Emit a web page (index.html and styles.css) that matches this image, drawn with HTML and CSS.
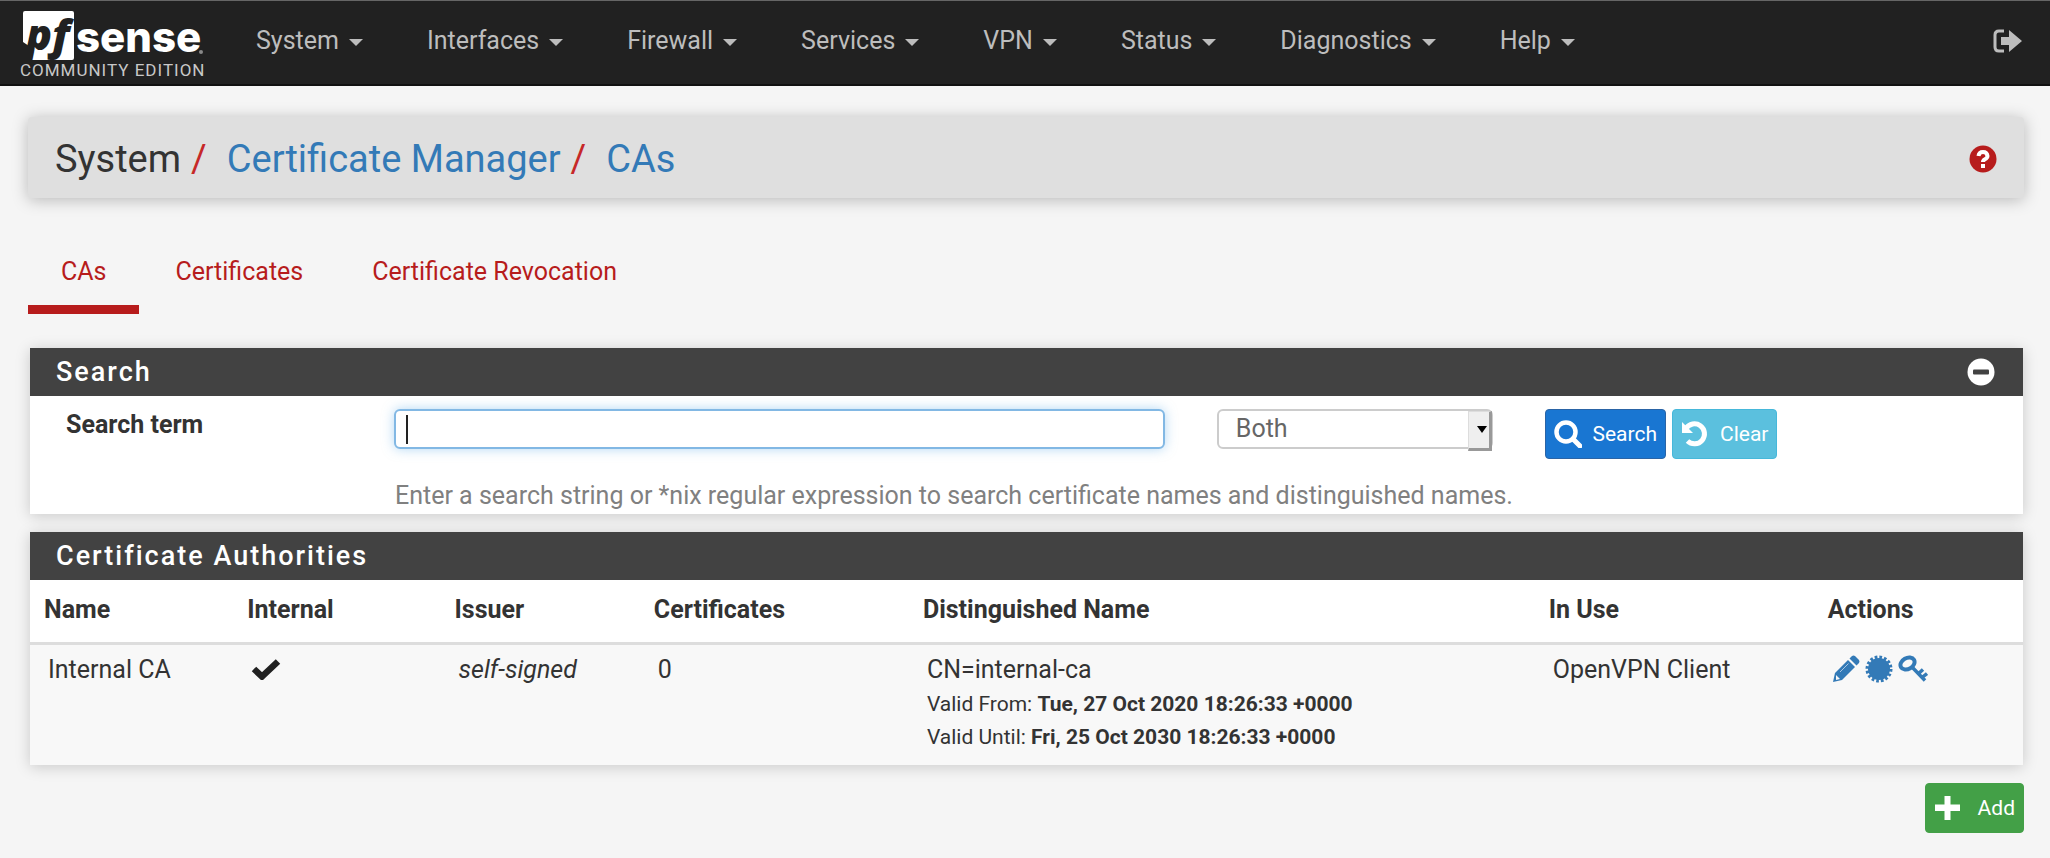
FILE: index.html
```html
<!DOCTYPE html>
<html lang="en">
<head>
  <meta charset="UTF-8">
  <meta name="viewport" content="width=device-width, initial-scale=1.0">
  <title>System: Certificate Manager: CAs</title>
  <link rel="stylesheet" href="styles.css">
</head>
<body>
  <nav class="navbar">
    <a class="navbar-brand" href="#" aria-label="pfSense Community Edition">
      <svg class="logo" viewBox="0 0 190 72" width="190" height="72">
        <path fill="#fff" d="M5 4h47q2 0 2 2v45q0 2-2 2H8l4-12-9-6V6q0-2 2-2z"/>
        <text class="logo-pf" x="6" y="43">pf</text>
        <text class="logo-sense" x="56" y="45">sense</text>
        <circle cx="181" cy="45" r="2" fill="#888"/>
        <text class="logo-edition" x="0" y="69">COMMUNITY EDITION</text>
      </svg>
    </a>
    <ul class="nav-menu">
      <li><a href="#">System <span class="caret"></span></a></li>
      <li><a href="#">Interfaces <span class="caret"></span></a></li>
      <li><a href="#">Firewall <span class="caret"></span></a></li>
      <li><a href="#">Services <span class="caret"></span></a></li>
      <li><a href="#">VPN <span class="caret"></span></a></li>
      <li><a href="#">Status <span class="caret"></span></a></li>
      <li><a href="#">Diagnostics <span class="caret"></span></a></li>
      <li><a href="#">Help <span class="caret"></span></a></li>
    </ul>
    <a class="logout" href="#" aria-label="Logout">
      <svg viewBox="0 0 30 24" width="30" height="24">
        <path d="M11 2H6Q2 2 2 6v12q0 4 4 4h5" fill="none" stroke="currentColor" stroke-width="3"/>
        <path d="M8 8h8V1l13 11-13 11v-7H8z" fill="currentColor"/>
      </svg>
    </a>
  </nav>

  <main class="container">
    <header class="page-header">
      <ol class="breadcrumb">
        <li>System</li>
        <li><a href="#">Certificate Manager</a></li>
        <li><a href="#">CAs</a></li>
      </ol>
      <a class="help" href="#" aria-label="Help for this page">
        <svg viewBox="0 0 28 28" width="28" height="28">
          <circle cx="14" cy="14" r="13.5" fill="currentColor"/>
          <path d="M9.500 11Q10 7 14 7t4.500 4q0 2-2.500 3.300-2 1-2 2.700" fill="none" stroke="#fff" stroke-width="4"/>
          <path d="M12 19h4v4h-4z" fill="#fff"/>
        </svg>
      </a>
    </header>

    <ul class="tabs">
      <li class="active"><a href="#">CAs</a></li>
      <li><a href="#">Certificates</a></li>
      <li><a href="#">Certificate Revocation</a></li>
    </ul>

    <section class="panel">
      <div class="panel-heading">
        <h2>Search</h2>
        <button class="toggle" type="button" aria-label="Collapse">
          <svg viewBox="0 0 28 28" width="28" height="28">
            <circle cx="14" cy="14" r="13.5" fill="#fff"/>
            <rect x="6" y="11.500" width="16" height="5" rx="1" fill="#424242"/>
          </svg>
        </button>
      </div>
      <form class="search-form">
        <label class="col-label" for="searchstr">Search term</label>
        <div class="col-input">
          <input id="searchstr" type="text">
        </div>
        <div class="col-select">
          <select id="searchtype" aria-label="Search in">
            <option>Name</option>
            <option>Distinguished Name</option>
            <option selected>Both</option>
          </select>
        </div>
        <div class="col-buttons">
          <button class="btn btn-primary" type="button">
            <svg viewBox="0 0 28 28" width="28" height="28">
              <circle cx="12" cy="12" r="9.500" fill="none" stroke="currentColor" stroke-width="4.500"/>
              <path d="M19 19l7 7" stroke="currentColor" stroke-width="5" stroke-linecap="round"/>
            </svg>
            Search
          </button>
          <button class="btn btn-info" type="button">
            <svg viewBox="0 0 28 28" width="28" height="28">
              <path d="M5 8.500A10 10 0 1 1 6.500 21" fill="none" stroke="currentColor" stroke-width="5"/>
              <path d="M1 2v11h11z" fill="currentColor"/>
            </svg>
            Clear
          </button>
        </div>
        <p class="help-block">Enter a search string or *nix regular expression to search certificate names and distinguished names.</p>
      </form>
    </section>

    <section class="panel">
      <div class="panel-heading">
        <h2>Certificate Authorities</h2>
      </div>
      <table class="ca-table">
        <colgroup>
          <col class="c-name">
          <col class="c-internal">
          <col class="c-issuer">
          <col class="c-certs">
          <col class="c-dn">
          <col class="c-use">
          <col>
        </colgroup>
        <thead>
          <tr>
            <th>Name</th>
            <th>Internal</th>
            <th>Issuer</th>
            <th>Certificates</th>
            <th>Distinguished Name</th>
            <th>In Use</th>
            <th>Actions</th>
          </tr>
        </thead>
        <tbody>
          <tr>
            <td>Internal CA</td>
            <td>
              <svg class="check" viewBox="0 0 30 22" width="30" height="22" role="img" aria-label="Yes">
                <path d="M3 11l8 7.500L27 3.500" fill="none" stroke="#212121" stroke-width="6.500"/>
              </svg>
            </td>
            <td><i>self-signed</i></td>
            <td>0</td>
            <td>
              CN=internal-ca
              <div class="validity">Valid From: <b>Tue, 27 Oct 2020 18:26:33 +0000</b></div>
              <div class="validity">Valid Until: <b>Fri, 25 Oct 2030 18:26:33 +0000</b></div>
            </td>
            <td>OpenVPN Client</td>
            <td>
              <div class="actions">
                <a href="#" aria-label="Edit CA">
                  <svg viewBox="0 0 28 28" width="28" height="28">
                    <path d="M1 27l2-9L16 5l7 7-13 13z" fill="currentColor"/>
                    <path d="M17.500 3.500L20 1q1.500-1 3 0l4 4q1 1.500 0 3l-2.500 2.500z" fill="currentColor"/>
                    <path d="M4 20l4 4-4 1z" fill="#f8f8f8"/>
                    <path d="M8 17l8.500-8.500" stroke="#a9c6e3" stroke-width="1"/>
                  </svg>
                </a>
                <a href="#" aria-label="Export CA">
                  <svg viewBox="0 0 28 28" width="28" height="28">
                    <circle cx="14" cy="14" r="11" fill="currentColor"/>
                    <circle cx="14" cy="14" r="11.500" fill="none" stroke="currentColor" stroke-width="4" stroke-dasharray="2.600 1.916"/>
                  </svg>
                </a>
                <a href="#" aria-label="Export key">
                  <svg viewBox="0 0 30 28" width="30" height="28">
                    <ellipse cx="9.500" cy="8.500" rx="7.500" ry="5.500" transform="rotate(-30 9.500 8.500)" fill="none" stroke="currentColor" stroke-width="4"/>
                    <path d="M14 12l13 13.500M20 19l5-4.500M24 22.500l5-4" fill="none" stroke="currentColor" stroke-width="3.500"/>
                  </svg>
                </a>
              </div>
            </td>
          </tr>
        </tbody>
      </table>
    </section>

    <div class="action-buttons">
      <button class="btn btn-success" type="button">
        <svg viewBox="0 0 28 28" width="28" height="28">
          <path d="M10.500 2h6v8.500H26v6.500h-9.500V26h-6v-9H1v-6.500h9.500z" fill="currentColor"/>
        </svg>
        Add
      </button>
    </div>
  </main>
</body>
</html>
```
FILE: styles.css
```css
:root {
  --bg: #f5f5f5;
  --text: #333;
  --muted: #808080;
  --red: #b71c1c;
  --link: #337ab7;
  --dark: #424242;
}

* {
  box-sizing: border-box;
}

body {
  margin: 0;
  background-color: var(--bg);
  color: var(--text);
  font-family: Roboto, "Liberation Sans", sans-serif;
  font-size: 25px;
  line-height: 36px;
}

a {
  color: var(--link);
  text-decoration: none;
}

ul, ol {
  list-style: none;
  margin: 0;
  padding: 0;
}

svg {
  display: block;
  flex: none;
}

/* top bar */
.navbar {
  display: flex;
  align-items: center;
  height: 86px;
  padding: 0 27px 0 20px;
  background-color: #212121;
  border-top: 1px solid #666;
  border-bottom: 2px solid #111;
}

.navbar-brand {
  margin-right: 46px;
}

.logo {
  overflow: visible;
}

.logo-pf {
  font: italic 800 43px "Open Sans", sans-serif;
  fill: #212121;
}

.logo-sense {
  font: 800 42px Inter, sans-serif;
  fill: #fff;
}

.logo-edition {
  font: 400 17px Roboto, sans-serif;
  letter-spacing: 1px;
  fill: #c8c8c8;
}

.nav-menu {
  display: flex;
  gap: 64px;
  flex: 1;
  padding-bottom: 3px;
}

.nav-menu a {
  display: flex;
  align-items: center;
  gap: 10px;
  color: #bdbdbd;
}

.caret {
  margin-top: 3px;
  border-top: 7px solid currentColor;
  border-left: 7px solid transparent;
  border-right: 7px solid transparent;
}

.logout {
  color: #bdbdbd;
  padding-bottom: 3px;
}

/* page */
.container {
  padding: 31px 26px 22px 28px;
}

.page-header {
  display: flex;
  align-items: center;
  justify-content: space-between;
  padding: 17px 27px 14px;
  background-color: #dfdfdf;
  border-radius: 4px;
  box-shadow: 0 2px 16px rgba(0, 0, 0, 0.25);
}

.breadcrumb {
  display: flex;
  font-size: 38px;
  line-height: 50px;
}

.breadcrumb li + li::before {
  content: "/";
  color: #c62828;
  margin: 0 20px 0 10px;
}

.help {
  color: var(--red);
}

.tabs {
  display: flex;
  gap: 3px;
  margin: 42px 0 34px;
}

.tabs a {
  display: block;
  padding: 14px 33px 15px;
  color: var(--red);
  border-bottom: 9px solid transparent;
}

.tabs .active a {
  border-bottom-color: var(--red);
}

/* panels */
.panel {
  margin: 0 1px 18px 2px;
  background-color: #fff;
  box-shadow: 0 2px 14px rgba(0, 0, 0, 0.18);
}

.panel-heading {
  display: flex;
  align-items: center;
  justify-content: space-between;
  height: 48px;
  padding: 0 28px 0 26px;
  background-color: var(--dark);
  color: #fff;
}

.panel-heading h2 {
  margin: 0;
  font-size: 27px;
  font-weight: 500;
  letter-spacing: 2px;
}

.toggle {
  padding: 0;
  border: 0;
  background: none;
}

.search-form {
  display: flex;
  flex-wrap: wrap;
  padding: 13px 3px 0 16px;
}

.col-label {
  width: 16.6%;
  padding: 0 20px;
  font-weight: bold;
  line-height: 32px;
}

.col-input {
  width: 41.7%;
  padding: 0 32px 0 20px;
}

.col-select {
  position: relative;
  width: 16.6%;
  padding: 0 32px 0 20px;
}

.col-buttons {
  display: flex;
  gap: 6px;
  width: 25%;
  padding: 0 20px;
}

.search-form input,
.search-form select {
  display: block;
  width: 100%;
  height: 40px;
  border: 2px solid #ccc;
  border-radius: 6px;
  background-color: #fff;
  color: #666;
  font: inherit;
}

.search-form input {
  padding: 0 12px;
  border-color: #82b8e4;
  box-shadow: 0 0 12px rgba(102, 175, 233, 0.5);
  background-image: linear-gradient(#222, #222);
  background-size: 2px 29px;
  background-position: 10px center;
  background-repeat: no-repeat;
}

.search-form select {
  appearance: none;
  padding: 0 17px;
}

/* drop-down button drawn over the right end of the select */
.col-select::before {
  content: "";
  position: absolute;
  top: 2px;
  right: 33px;
  width: 20px;
  height: 36px;
  background-color: #efefef;
  border: 1px solid #ddd;
  border-right: 3px solid #999;
  border-bottom: 3px solid #999;
  pointer-events: none;
}

.col-select::after {
  content: "";
  position: absolute;
  top: 17px;
  right: 38px;
  border-top: 7px solid #000;
  border-left: 5px solid transparent;
  border-right: 5px solid transparent;
  pointer-events: none;
}

.btn {
  display: flex;
  align-items: center;
  gap: 11px;
  height: 50px;
  padding: 0 8px;
  border: 1px solid transparent;
  border-radius: 4px;
  color: #fff;
  font: inherit;
  font-size: 21px;
}

.btn-primary {
  background-color: #1976d2;
  border-color: #2a64a6;
}

.btn-info {
  background-color: #5bc0de;
  border-color: #46b8da;
}

.btn-success {
  gap: 16px;
  background-color: #43a047;
  border-color: #43a047;
}

.help-block {
  width: 100%;
  margin: 0;
  padding: 19px 20px 0 349px;
  color: var(--muted);
}

/* CA list */
.ca-table {
  width: 100%;
  table-layout: fixed;
  border-collapse: collapse;
}

.c-name { width: 10.2%; }
.c-internal { width: 10.4%; }
.c-issuer { width: 10%; }
.c-certs { width: 13.5%; }
.c-dn { width: 31.4%; }
.c-use { width: 14%; }

.ca-table th {
  padding: 12px 0 14px 14px;
  border-bottom: 3px solid #ddd;
  text-align: left;
}

.ca-table td {
  padding: 7px 0 11px 18px;
  background-color: #f8f8f8;
  vertical-align: top;
}

.validity {
  font-size: 21px;
  line-height: 33px;
}

.check {
  margin-top: 6px;
}

.actions {
  display: flex;
  gap: 5px;
  padding-top: 3px;
}

.action-buttons {
  display: flex;
  justify-content: flex-end;
}
```
